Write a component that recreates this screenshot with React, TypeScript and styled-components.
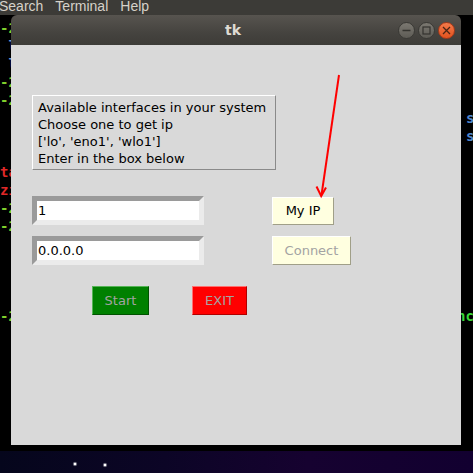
import React from "react";
import styled, { createGlobalStyle } from "styled-components";

const Global = createGlobalStyle`
  html, body { margin: 0; padding: 0; background: #000; }
  * { box-sizing: border-box; }
`;

const Screen = styled.div`
  position: relative;
  width: 473px;
  height: 473px;
  overflow: hidden;
  background: #000;
  display: flex;
  flex-direction: column;
`;

const MenuBar = styled.div`
  height: 15px;
  background: #3c3b37;
  display: flex;
  align-items: flex-end;
  gap: 12px;
  padding-left: 0;
  margin-left: -1px;
  font: 14px "Liberation Sans", Arial, sans-serif;
  line-height: 15px;
  color: #d6d2c9;
  overflow: hidden;
  span { position: relative; top: -1px; }
`;

/* terminal behind the tk window */
const Terminal = styled.div`
  position: relative;
  flex: 1;
  background: #000;
  padding-top: 4px;
  overflow: hidden;
  font: bold 14px "DejaVu Sans Mono", monospace;
  line-height: 18px;
  white-space: pre;
`;

const TermRow = styled.div<{ $split?: number }>`
  height: 18px;
  display: grid;
  grid-template-columns: ${(p) => p.$split ?? 466}px max-content;
  overflow: hidden;
`;

const TermText = styled.span<{ $c: string }>`
  color: ${(p) => p.$c};
  overflow: hidden;
`;

const Desktop = styled.div`
  height: 22px;
  background:
    radial-gradient(circle at 75px 13px, #fff 0 1px, rgba(255,255,255,0.4) 1.6px, transparent 2.6px),
    radial-gradient(circle at 105px 14px, #fff 0 1px, rgba(255,255,255,0.4) 1.6px, transparent 2.6px),
    linear-gradient(90deg, #05061c 0%, #0c0526 35%, #160230 65%, #120030 100%);
`;

/* tk window */
const Window = styled.div`
  position: absolute;
  left: 11px;
  top: 0;
  width: 450px;
  height: 430px;
  display: flex;
  flex-direction: column;
  border-radius: 6px 6px 0 0;
  overflow: hidden;
`;

const TitleBar = styled.div`
  height: 30px;
  background: linear-gradient(#57544f, #45433f 60%, #3d3c38);
  display: grid;
  grid-template-columns: 1fr auto 1fr;
  align-items: center;
  padding-right: 6px;
`;

const Title = styled.div`
  grid-column: 2;
  font: bold 14px "DejaVu Sans", sans-serif;
  color: #dfdbd2;
`;

const WinButtons = styled.div`
  grid-column: 3;
  justify-self: end;
  display: flex;
  gap: 3px;
`;

const Circle = styled.div<{ $close?: boolean }>`
  width: 17px;
  height: 17px;
  border-radius: 50%;
  border: 1px solid ${(p) => (p.$close ? "#a8391a" : "#3a3935")};
  background: ${(p) =>
    p.$close
      ? "linear-gradient(#f37a4a, #e2531f)"
      : "linear-gradient(#7b7871, #5d5b55)"};
  display: flex;
  align-items: center;
  justify-content: center;
`;

const Body = styled.div`
  flex: 1;
  background: #d9d9d9;
  padding: 50px 0 0 21px;
  display: flex;
  flex-direction: column;
  align-items: flex-start;
  font: 13px "DejaVu Sans", sans-serif;
`;

const InfoLabel = styled.div`
  width: 244px;
  height: 75px;
  border: 1px solid;
  border-color: #ffffff #8a8a8a #8a8a8a #ffffff;
  padding: 3px 5px 2px 5px;
  line-height: 17px;
  color: #000;
  margin-bottom: 26px;
`;

const Row = styled.div<{ $gap?: number; $mb?: number; $pl?: number }>`
  display: flex;
  align-items: center;
  gap: ${(p) => p.$gap ?? 68}px;
  margin-bottom: ${(p) => p.$mb ?? 0}px;
  padding-left: ${(p) => p.$pl ?? 0}px;
`;

const Entry = styled.input`
  width: 172px;
  height: 29px;
  border: 5px solid;
  border-color: #9a9a9a #ebebeb #ebebeb #9a9a9a;
  background: #fff;
  padding: 0 0 0 1px;
  margin: 0;
  font: 13px "DejaVu Sans", sans-serif;
  color: #000;
  outline: none;
`;

const TkButton = styled.button<{
  $bg: string;
  $fg: string;
  $light: string;
  $dark: string;
  $w: number;
  $h?: number;
}>`
  width: ${(p) => p.$w}px;
  height: ${(p) => p.$h ?? 29}px;
  background: ${(p) => p.$bg};
  color: ${(p) => p.$fg};
  border: 1px solid;
  border-color: ${(p) => `${p.$light} ${p.$dark} ${p.$dark} ${p.$light}`};
  padding: 0;
  margin: 0;
  font: 13px "DejaVu Sans", sans-serif;
`;

const Annotation = styled.svg`
  position: absolute;
  left: 0;
  top: 0;
  pointer-events: none;
`;

const termLines: { l?: [string, string]; r?: [string, string]; split?: number }[] = [
  { l: ["-2", "#7fcf2c"] },
  { l: [" l", "#6f9fd6"] },
  { l: [" l", "#6f9fd6"] },
  { l: ["-2", "#7fcf2c"] },
  { l: ["-2", "#7fcf2c"] },
  { r: ["sudo", "#4f86cc"] },
  { r: ["sudo", "#4f86cc"] },
  {},
  { l: ["tar", "#e02828"] },
  { l: ["zip", "#e02828"] },
  { l: ["-2", "#7fcf2c"] },
  { l: ["-2", "#7fcf2c"] },
  {},
  {},
  {},
  {},
  { l: ["-2", "#7fcf2c"], r: ["nc", "#3ad83a"], split: 457 },
];

const App: React.FC = () => {
  return (
    <Screen>
      <Global />
      <MenuBar>
        <span>Search</span>
        <span>Terminal</span>
        <span>Help</span>
      </MenuBar>

      <Terminal>
        {termLines.map((t, i) => (
          <TermRow key={i} $split={t.split}>
            <TermText $c={t.l ? t.l[1] : "#000"}>{t.l ? t.l[0] : ""}</TermText>
            <TermText $c={t.r ? t.r[1] : "#000"}>{t.r ? t.r[0] : ""}</TermText>
          </TermRow>
        ))}

        <Window>
          <TitleBar>
            <Title>tk</Title>
            <WinButtons>
              <Circle>
                <svg width="9" height="9" viewBox="0 0 9 9">
                  <path d="M0.5 4.5h8" stroke="#34332f" strokeWidth="1.3" />
                </svg>
              </Circle>
              <Circle>
                <svg width="9" height="9" viewBox="0 0 9 9">
                  <rect x="1" y="1" width="7" height="7" fill="none" stroke="#34332f" strokeWidth="1.2" />
                </svg>
              </Circle>
              <Circle $close>
                <svg width="9" height="9" viewBox="0 0 9 9">
                  <path d="M1 1l7 7M8 1l-7 7" stroke="#4a2414" strokeWidth="1.3" />
                </svg>
              </Circle>
            </WinButtons>
          </TitleBar>

          <Body>
            <InfoLabel>
              Available interfaces in your system
              <br />
              Choose one to get ip
              <br />
              ['lo', 'eno1', 'wlo1']
              <br />
              Enter in the box below
            </InfoLabel>

            <Row $mb={11}>
              <Entry defaultValue="1" />
              <TkButton $bg="#ffffe0" $fg="#000" $light="#ffffff" $dark="#a09f88" $w={62} $h={28}>
                My IP
              </TkButton>
            </Row>

            <Row $mb={21}>
              <Entry defaultValue="0.0.0.0" />
              <TkButton $bg="#ffffe0" $fg="#a3a3a3" $light="#ffffff" $dark="#a09f88" $w={79}>
                Connect
              </TkButton>
            </Row>

            <Row $gap={43} $pl={60}>
              <TkButton $bg="#008000" $fg="#a3a3a3" $light="#55b455" $dark="#005200" $w={57}>
                Start
              </TkButton>
              <TkButton $bg="#ff0000" $fg="#a3a3a3" $light="#ff7070" $dark="#b00000" $w={55}>
                EXIT
              </TkButton>
            </Row>
          </Body>
        </Window>
      </Terminal>

      <Desktop />

      <Annotation width="473" height="473" viewBox="0 0 473 473">
        <path d="M339 75L321.5 195" stroke="#ff0000" strokeWidth="2" fill="none" />
        <path d="M316.5 186.5L321.2 196L326 187.5" stroke="#ff0000" strokeWidth="2" fill="none" />
      </Annotation>
    </Screen>
  );
};

export default App;
